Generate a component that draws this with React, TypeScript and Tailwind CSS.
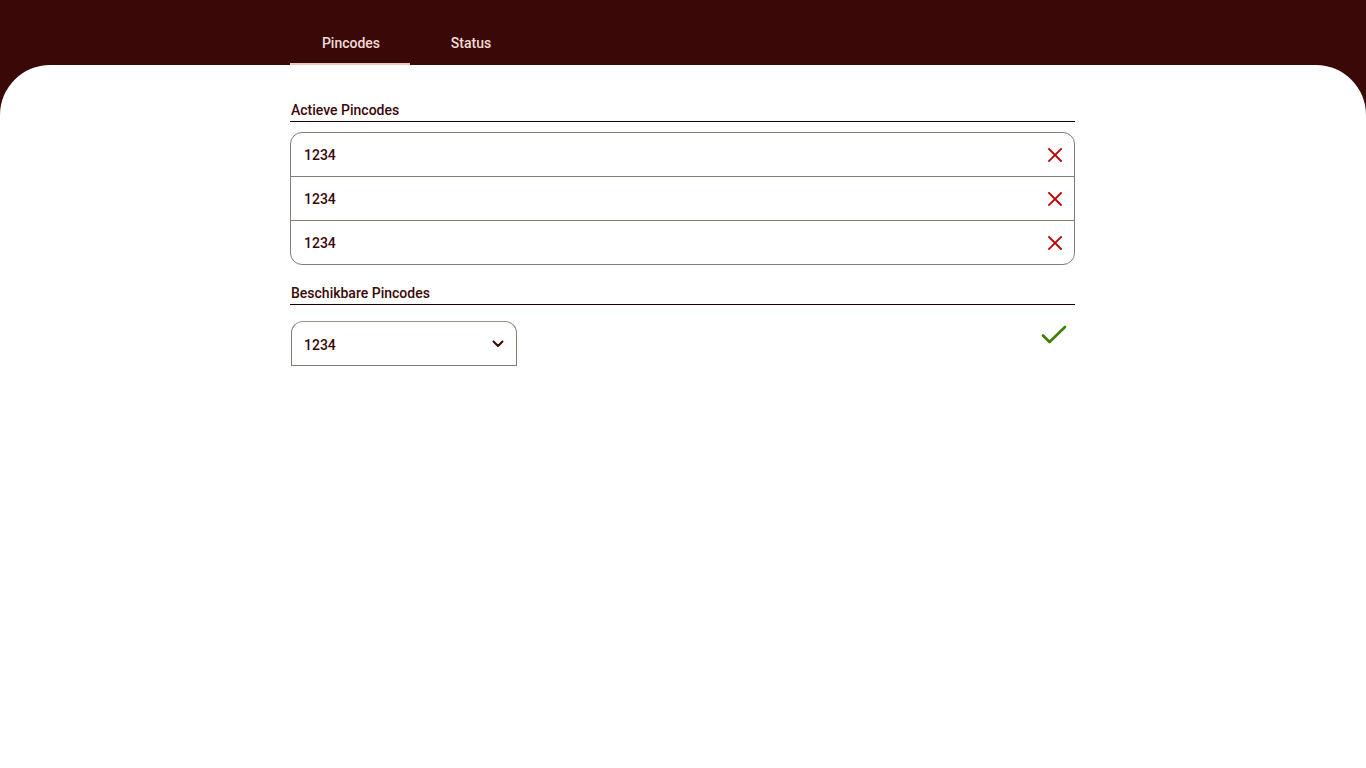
import React from "react";

const XIcon = () => (
  <svg width="14" height="14" viewBox="0 0 14 14" fill="none">
    <path d="M1 1L13 13M13 1L1 13" stroke="#c00000" strokeWidth="1.8" strokeLinecap="square" />
  </svg>
);

const Chevron = () => (
  <svg width="12" height="8" viewBox="0 0 12 8" fill="none">
    <path d="M1.5 1.5L6 6L10.5 1.5" stroke="#3b0808" strokeWidth="2" strokeLinecap="round" strokeLinejoin="round" />
  </svg>
);

const Check = () => (
  <svg width="26" height="20" viewBox="0 0 26 20" fill="none">
    <path d="M2 10.5L8.5 17L24 2" stroke="#3f7f00" strokeWidth="2.6" strokeLinecap="round" strokeLinejoin="round" />
  </svg>
);

export default function App() {
  const pins = ["1234", "1234", "1234"];
  return (
    <div
      className="w-[1366px] h-[768px] bg-[#3b0808] flex flex-col overflow-hidden"
      style={{ fontFamily: "Roboto, 'Liberation Sans', sans-serif" }}
    >
      <div className="h-[65px] flex items-end pl-[290px]">
        <div className="w-[120px] h-[65px] flex items-center justify-center pt-[24px] pl-[2px] border-b-2 border-[#e9c9c0] text-[14px] font-medium text-[#f2dcd6]">
          Pincodes
        </div>
        <div className="w-[122px] h-[65px] flex items-center justify-center pt-[22px] text-[14px] font-medium text-[#f2dcd6]">
          Status
        </div>
      </div>
      <div className="flex-1 bg-white rounded-t-[50px] pl-[290px] pt-[37px]">
        <div className="w-[785px] flex flex-col">
          <div className="text-[14px] font-medium text-[#3b0808] leading-[16px] pl-[1px] pb-[3px] border-b border-[#1a0000]">
            Actieve Pincodes
          </div>
          <div className="mt-[10px] border border-[#8a7a76] rounded-[12px] flex flex-col">
            {pins.map((p, i) => (
              <div
                key={i}
                className={`flex items-center justify-between pl-[13px] pr-[12px] ${
                  i > 0 ? "h-[44px] border-t border-[#8a7a76]" : "h-[43px]"
                }`}
              >
                <span className="mt-[2px] text-[14px] font-medium text-[#3b0808]">{p}</span>
                <XIcon />
              </div>
            ))}
          </div>
          <div className="mt-[20px] text-[14px] font-medium text-[#3b0808] leading-[16px] pl-[1px] pb-[3px] border-b border-[#1a0000]">
            Beschikbare Pincodes
          </div>
          <div className="mt-[16px] flex items-start justify-between">
            <div className="ml-[1px] w-[226px] h-[45px] border border-[#8a7a76] border-t-[#9d8f8b] rounded-t-[12px] flex items-center justify-between pl-[12px] pr-[12px]">
              <span className="mt-[4px] text-[14px] font-medium text-[#3b0808]">1234</span>
              <Chevron />
            </div>
            <div className="mt-[4px] mr-[8px]">
              <Check />
            </div>
          </div>
        </div>
      </div>
    </div>
  );
}
